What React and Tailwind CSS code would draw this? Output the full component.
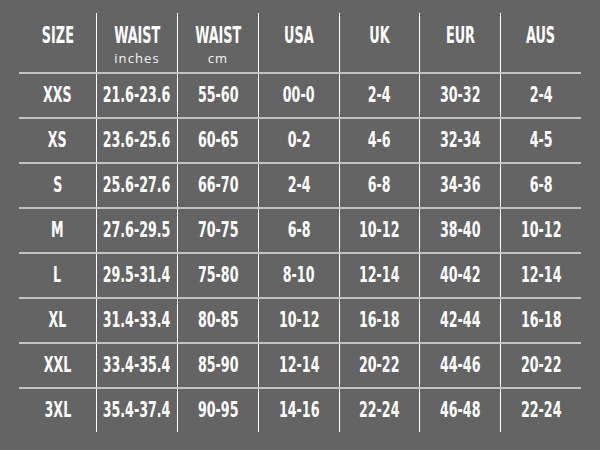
const headers = [
  { label: "SIZE" },
  { label: "WAIST", sub: "inches" },
  { label: "WAIST", sub: "cm" },
  { label: "USA" },
  { label: "UK" },
  { label: "EUR" },
  { label: "AUS" },
];

const rows = [
  ["XXS", "21.6-23.6", "55-60", "00-0", "2-4", "30-32", "2-4"],
  ["XS", "23.6-25.6", "60-65", "0-2", "4-6", "32-34", "4-5"],
  ["S", "25.6-27.6", "66-70", "2-4", "6-8", "34-36", "6-8"],
  ["M", "27.6-29.5", "70-75", "6-8", "10-12", "38-40", "10-12"],
  ["L", "29.5-31.4", "75-80", "8-10", "12-14", "40-42", "12-14"],
  ["XL", "31.4-33.4", "80-85", "10-12", "16-18", "42-44", "16-18"],
  ["XXL", "33.4-35.4", "85-90", "12-14", "20-22", "44-46", "20-22"],
  ["3XL", "35.4-37.4", "90-95", "14-16", "22-24", "46-48", "22-24"],
];

const widths = ["w-[77px]", "w-[81px]", "w-[81px]", "w-[81px]", "w-[80px]", "w-[81px]", "w-[81px]"];

const condensed = "font-['Liberation_Sans_Narrow','DejaVu_Sans_Condensed',sans-serif] font-bold whitespace-nowrap";

const App = () => {
  return (
    <div className="w-[600px] h-[450px] bg-[#646464] pl-[19px] pt-[13px] text-white">
      <div className="flex h-[59px]">
        {headers.map((h, i) => (
          <div
            key={i}
            className={`${widths[i]} flex flex-col items-center pt-[9px] ${i > 0 ? "border-l border-white" : ""}`}
          >
            <span className={`${condensed} inline-block scale-x-[0.62] text-[23px] leading-[27px]`}>
              {h.label}
            </span>
            {h.sub && (
              <span className="font-['Open_Sans',sans-serif] text-[13px] leading-[18px] tracking-[1.1px] text-[#f4f4f4]">
                {h.sub}
              </span>
            )}
          </div>
        ))}
      </div>
      {rows.map((row, r) => (
        <div
          key={r}
          className={`flex border-t-2 border-[#c2c2c2] w-[562px] ${r === rows.length - 1 ? "h-[50px] pb-[5px]" : "h-[45px]"}`}
        >
          {row.map((cell, c) => (
            <div
              key={c}
              className={`${widths[c]} flex items-center justify-center ${c > 0 ? "border-l border-white" : ""}`}
            >
              <span className={`${condensed} inline-block scale-x-[0.67] text-[21px] leading-[21px]`}>
                {cell}
              </span>
            </div>
          ))}
        </div>
      ))}
    </div>
  );
};

export default App;
